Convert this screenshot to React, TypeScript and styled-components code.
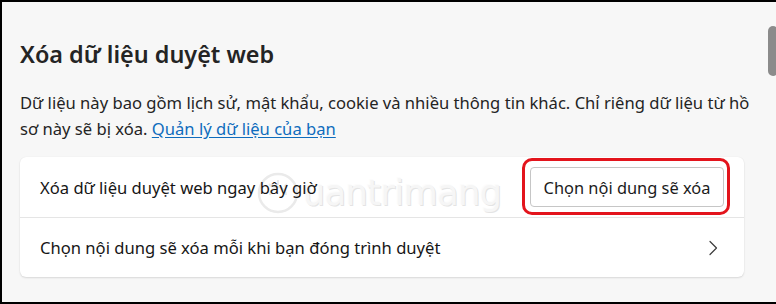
import { createGlobalStyle } from 'styled-components';
import styled from 'styled-components';

const GlobalStyle = createGlobalStyle`
  html, body {
    margin: 0;
    padding: 0;
    background: #f7f7f7;
  }
  * {
    box-sizing: border-box;
  }
`;

const Frame = styled.div`
  display: flex;
  width: 776px;
  height: 304px;
  overflow: hidden;
  background: #f7f7f7;
  border-top: 2px solid #000;
  border-left: 2px solid #000;
  border-bottom: 2px solid #000;
  font-family: 'Noto Sans', 'Open Sans', sans-serif;
  color: #1b1b1b;
`;

const Content = styled.main`
  flex: 1;
  padding: 36px 12px 0 18px;
  display: flex;
  flex-direction: column;
`;

const Title = styled.h1`
  margin: 0;
  font-size: 23.4px;
  line-height: 32px;
  font-weight: 600;
  color: #242424;
`;

const Description = styled.p`
  margin: 20px 0 0;
  font-size: 16.6px;
  line-height: 26px;
  color: #242424;
  width: 736px;
`;

const Link = styled.a`
  color: #0f6cbd;
  text-decoration: underline;
  text-underline-offset: 2px;
  cursor: pointer;
`;

const Card = styled.section`
  position: relative;
  margin-top: 15px;
  width: 724px;
  background: #fff;
  border-radius: 6px;
  box-shadow: 0 1px 2px rgba(0, 0, 0, 0.12), 0 0 1px rgba(0, 0, 0, 0.08);
`;

const Row = styled.div<{ $divider?: boolean }>`
  position: relative;
  z-index: 1;
  display: flex;
  align-items: center;
  justify-content: space-between;
  height: 60px;
  padding: 0 20px;
  border-top: ${(p) => (p.$divider ? '1px solid #e5e5e5' : 'none')};
  font-size: 16.6px;
  font-weight: 400;
  color: #161616;
`;

const Highlight = styled.div`
  position: relative;
`;

const RedRing = styled.span`
  position: absolute;
  top: -9px;
  left: -8px;
  right: -6px;
  bottom: -8px;
  border: 3px solid #e3141c;
  border-radius: 10px;
  pointer-events: none;
`;

const Button = styled.button`
  height: 40px;
  width: 194px;
  padding: 0 10px;
  background: #fff;
  border: 1px solid #c6c6c6;
  border-radius: 4px;
  font-family: inherit;
  font-size: 16.4px;
  color: #1b1b1b;
  cursor: pointer;
`;

const Chevron = styled.svg`
  width: 16px;
  height: 18px;
  margin-right: 3px;
`;

const Watermark = styled.div`
  position: absolute;
  z-index: 0;
  left: 236px;
  top: 14px;
  display: flex;
  align-items: center;
  gap: 3px;
  pointer-events: none;
  color: #f6f6f6;
  font-family: 'DejaVu Sans', sans-serif;
  font-size: 35px;
  letter-spacing: -0.5px;
  text-shadow: 1px 1px 0 #e4e4e4, -1px -1px 0 #fcfcfc;
`;

const ScrollSide = styled.div`
  position: relative;
  width: 20px;
  flex-shrink: 0;
`;

const Thumb = styled.div`
  position: absolute;
  left: 0;
  top: 24px;
  width: 10px;
  height: 50px;
  border-radius: 5px;
  background: #8b8b8b;
`;

const TrackLine = styled.div`
  position: absolute;
  left: 10px;
  top: 0;
  bottom: 0;
  width: 1px;
  background: #b4b4b4;
`;

export default function App() {
  return (
    <>
      <GlobalStyle />
      <Frame>
        <Content>
          <Title>Xóa dữ liệu duyệt web</Title>
          <Description>
            Dữ liệu này bao gồm lịch sử, mật khẩu, cookie và nhiều thông tin khác. Chỉ riêng dữ liệu từ hồ
            sơ này sẽ bị xóa. <Link>Quản lý dữ liệu của bạn</Link>
          </Description>
          <Card>
            <Watermark>
              <svg width="44" height="44" viewBox="0 0 44 44" fill="none">
                <circle cx="22" cy="22" r="19" stroke="#eaeaea" strokeWidth="2.5" />
                <path d="M14 24 a8 8 0 0 1 16 0" stroke="#eaeaea" strokeWidth="2" />
                <path d="M22 9 v5 M13 13 l3 3 M31 13 l-3 3" stroke="#eaeaea" strokeWidth="2" />
              </svg>
              <span>uantrimang</span>
            </Watermark>
            <Row>
              <span>Xóa dữ liệu duyệt web ngay bây giờ</span>
              <Highlight>
                <Button>Chọn nội dung sẽ xóa</Button>
                <RedRing />
              </Highlight>
            </Row>
            <Row $divider>
              <span>Chọn nội dung sẽ xóa mỗi khi bạn đóng trình duyệt</span>
              <Chevron viewBox="0 0 16 18" fill="none">
                <path d="M5 2.5 L11.5 9 L5 15.5" stroke="#3b3b3b" strokeWidth="1.2" strokeLinecap="round" strokeLinejoin="round" />
              </Chevron>
            </Row>
          </Card>
        </Content>
        <ScrollSide>
          <Thumb />
          <TrackLine />
        </ScrollSide>
      </Frame>
    </>
  );
}
